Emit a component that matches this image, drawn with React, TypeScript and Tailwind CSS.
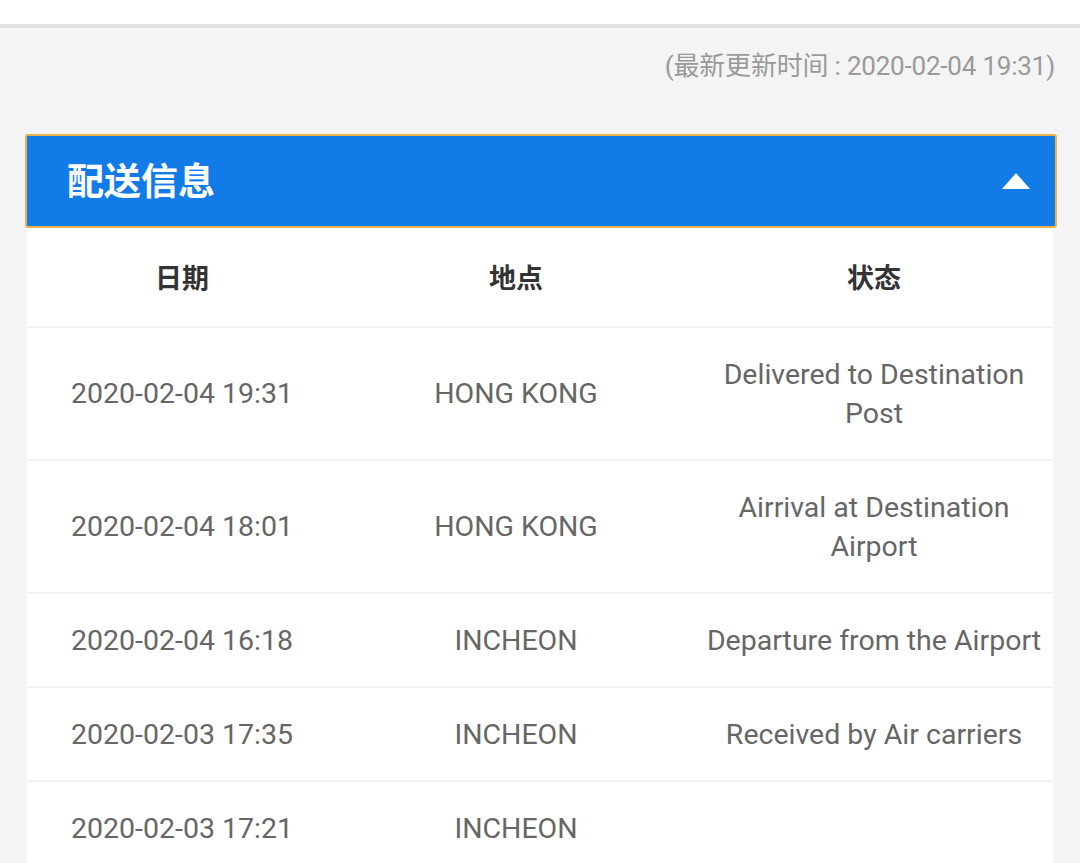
import React from "react";

const rows: { date: string; place: string; status: string[] }[] = [
  { date: "2020-02-04 19:31", place: "HONG KONG", status: ["Delivered to Destination", "Post"] },
  { date: "2020-02-04 18:01", place: "HONG KONG", status: ["Airrival at Destination", "Airport"] },
  { date: "2020-02-04 16:18", place: "INCHEON", status: ["Departure from the Airport"] },
  { date: "2020-02-03 17:35", place: "INCHEON", status: ["Received by Air carriers"] },
  { date: "2020-02-03 17:21", place: "INCHEON", status: [] },
];

export default function App() {
  return (
    <div
      className="w-[1080px] h-[863px] overflow-hidden bg-[#f4f4f4]"
      style={{ fontFamily: 'Roboto, "Noto Sans CJK SC", sans-serif' }}
    >
      <div className="h-[24px] bg-white" />
      <div className="h-[4px] bg-[#e2e2e2]" />
      <div className="flex justify-end pr-[25px] pt-[22px] h-[106px]">
        <span className="text-[26px] leading-[32px] text-[#9a9a9a] tracking-[-0.2px]">
          (最新更新时间 : 2020-02-04 19:31)
        </span>
      </div>
      <div className="mx-[25px] w-[1032px] h-[94px] rounded-[3px] border-2 border-[#e9b44c] bg-[#137be8] flex items-center justify-between pl-[40px] pr-[25px] pt-[4px]">
        <span className="text-white font-bold text-[37px] leading-[40px]">配送信息</span>
        <svg width="28" height="16" viewBox="0 0 28 16" className="-mt-[4px]">
          <polygon points="14,0 28,16 0,16" fill="#ffffff" />
        </svg>
      </div>
      <div className="ml-[27px] w-[1026px] bg-white">
        <div className="grid grid-cols-[310px_358px_358px] h-[100px] items-center border-b-2 border-[#f2f2f2] pt-[5px]">
          <div className="text-center font-bold text-[27px] text-[#333]">日期</div>
          <div className="text-center font-bold text-[27px] text-[#333]">地点</div>
          <div className="text-center font-bold text-[27px] text-[#333]">状态</div>
        </div>
        {rows.map((r, i) => (
          <div
            key={i}
            className="grid grid-cols-[310px_358px_358px] items-center border-b-2 border-[#f2f2f2] py-[26.5px] text-[28.5px] leading-[39px] text-[#666]"
          >
            <div className="text-center">{r.date}</div>
            <div className="text-center">{r.place}</div>
            <div className="text-center">
              {r.status.length ? r.status.map((s, j) => <div key={j}>{s}</div>) : <div>&nbsp;</div>}
            </div>
          </div>
        ))}
      </div>
    </div>
  );
}
